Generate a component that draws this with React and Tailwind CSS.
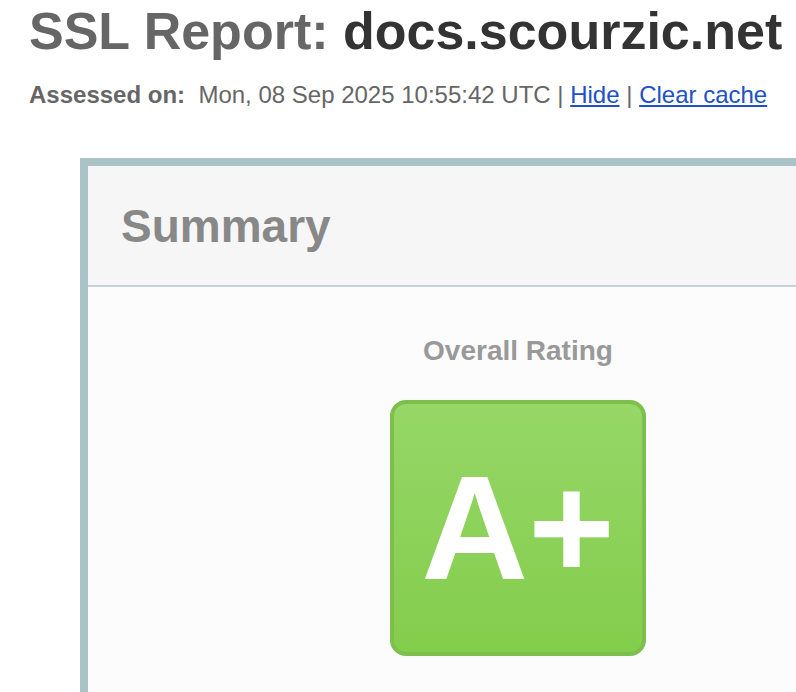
export default function App() {
  return (
    <div className="h-[692px] bg-white overflow-hidden font-['Liberation_Sans',Arial,sans-serif]">
      <div className="pl-[29px]">
        <h1 className="text-[52px] leading-[62px] font-bold whitespace-nowrap text-[#666666]">
          SSL Report: <span className="text-[#333333]">docs.scourzic.net</span>
        </h1>
        <div className="mt-[19px] text-[24px] leading-[28px] text-[#666666] whitespace-nowrap">
          <span className="font-bold">Assessed on:</span>
          <span>&nbsp;&nbsp;Mon, 08 Sep 2025 10:55:42 UTC | </span>
          <a href="#" className="text-[#2050c8] underline">Hide</a>
          <span> | </span>
          <a href="#" className="text-[#2050c8] underline">Clear cache</a>
        </div>
      </div>

      <div className="ml-[80px] mt-[49px] w-[900px] border-l-[8px] border-t-[8px] border-[#aac3c6] bg-[#fcfcfc] min-h-[600px]">
        <div className="h-[121px] bg-[#f6f6f6] border-b-[2px] border-[#c8d3d6] flex items-center pl-[33px]">
          <h2 className="text-[46px] font-bold text-[#888888] leading-none">Summary</h2>
        </div>
        <div className="w-[860px] flex flex-col items-center pt-[48px]">
          <div className="text-[28px] font-bold text-[#999999] leading-[32px]">Overall Rating</div>
          <div className="mt-[33px] w-[256px] h-[256px] rounded-[16px] border-[4px] border-[#7cbf4c] bg-gradient-to-b from-[#96d767] to-[#83cd4c] flex items-center justify-center">
            <span className="text-white font-bold text-[148px] leading-none">A+</span>
          </div>
        </div>
      </div>
    </div>
  );
}
